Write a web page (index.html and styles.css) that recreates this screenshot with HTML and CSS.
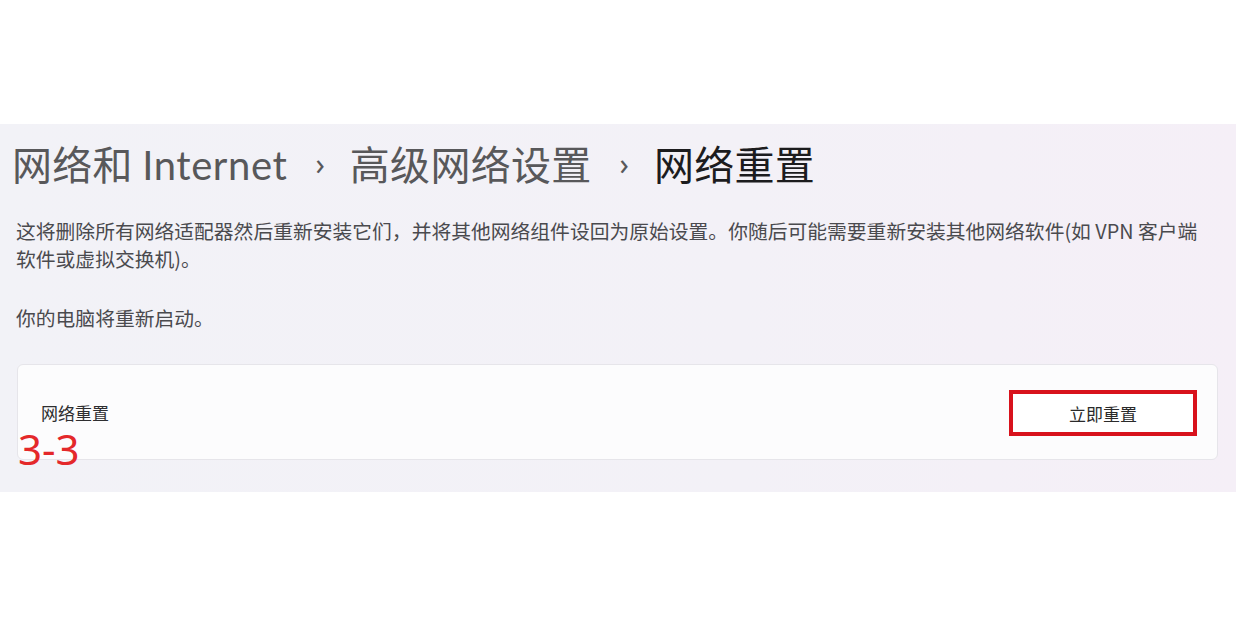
FILE: index.html
```html
<!DOCTYPE html>
<html lang="zh-CN">
<head>
<meta charset="utf-8">
<title>网络重置</title>
<link rel="stylesheet" href="styles.css">
</head>
<body>
<div class="top-space"></div>
<section class="panel">
  <h1 class="crumbs">
    <span class="crumb">网络和 <span class="latin">Internet</span></span>
    <span class="sep">›</span>
    <span class="crumb">高级网络设置</span>
    <span class="sep">›</span>
    <span class="crumb current">网络重置</span>
  </h1>
  <p class="desc">这将删除所有网络适配器然后重新安装它们，并将其他网络组件设回为原始设置。你随后可能需要重新安装其他网络软件(如 VPN 客户端<br>软件或虚拟交换机)。</p>
  <p class="desc note">你的电脑将重新启动。</p>
  <div class="card">
    <span class="card-label">网络重置</span>
    <button class="reset-btn">立即重置</button>
    <span class="tag">3-3</span>
  </div>
</section>
</body>
</html>
```

FILE: styles.css
```css
html, body {
  margin: 0;
  padding: 0;
  background: #ffffff;
}
body {
  width: 1236px;
  height: 618px;
  overflow: hidden;
  font-family: "Noto Sans", "Noto Sans CJK SC", sans-serif;
}
.top-space {
  height: 124px;
}
.panel {
  height: 368px;
  box-sizing: border-box;
  padding: 15px 18px 0 16px;
  background: linear-gradient(90deg, #f2f2f7 0%, #f3f1f7 60%, #f5eff7 100%);
}
.crumbs {
  margin: 0;
  display: flex;
  align-items: center;
  height: 48px;
  font-weight: 400;
  font-size: 40px;
  font-family: "Noto Sans CJK SC", sans-serif;
  color: #58585a;
  margin-left: -4px;
  white-space: nowrap;
}
.crumb {
  letter-spacing: 0.3px;
}
.latin {
  font-family: "Lato", "Noto Sans", sans-serif;
  font-weight: 400;
  letter-spacing: 0.6px;
}
.crumb.current {
  color: #1c1c1e;
}
.sep {
  font-family: "Noto Sans", sans-serif;
  font-size: 30px;
  margin: 0 25px 0 28px;
  color: #58585a;
}
.desc {
  margin: 30px 0 0 0;
  font-size: 19.8px;
  line-height: 28px;
  color: #4a4a4e;
  font-family: "Noto Sans CJK SC", sans-serif;
  white-space: nowrap;
}
.note {
  margin-top: 31px;
}
.card {
  position: relative;
  margin: 32px 0 0 1px;
  height: 96px;
  box-sizing: border-box;
  background: #fcfcfd;
  border: 1px solid #e6e5ea;
  border-radius: 6px;
  display: flex;
  align-items: center;
  justify-content: space-between;
  padding: 0 20px 0 23px;
}
.card-label {
  font-family: "Noto Sans CJK SC", sans-serif;
  font-size: 17px;
  color: #2e2e30;
}
.reset-btn {
  width: 188px;
  height: 46px;
  box-sizing: border-box;
  border: 4px solid #d8121c;
  background: #ffffff;
  font-family: "Noto Sans CJK SC", sans-serif;
  font-size: 17px;
  color: #2a2a2a;
  padding: 0;
  margin-top: 2px;
}
.tag {
  position: absolute;
  left: 0;
  top: 60px;
  font-family: "Noto Sans", sans-serif;
  font-size: 42px;
  line-height: 48px;
  color: #e4282a;
}
```
